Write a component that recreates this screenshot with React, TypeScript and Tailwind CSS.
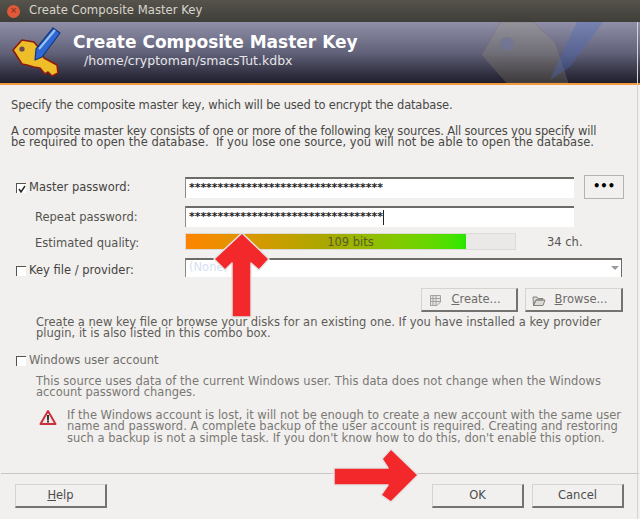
const font = { fontFamily: '"DejaVu Sans", sans-serif' };

function Arrow({ points, className }: { points: string; className: string }) {
  return (
    <svg className={className} viewBox="0 0 640 519" width={640} height={519}>
      <polygon points={points} fill="#f2282b" stroke="#e4e4e4" strokeWidth="1.5" strokeLinejoin="round" />
    </svg>
  );
}

function KeyIcon() {
  return (
    <svg width="52" height="52" viewBox="0 0 52 52" className="shrink-0">
      <path d="M1 23 L10 13 L22 15 L27 21 L32 31 L45 38 L46 46 L40 49 L36 45 L33 47 L28 41 L22 40 L15 38 L10 37 Z" fill="#eebd2a" stroke="#8c1c10" strokeWidth="1.6" strokeLinejoin="round" />
      <circle cx="10" cy="22" r="2.6" fill="#6a4a4a" />
      <path d="M23 33 L24 22 L41 1 L48 6 L30 30 Z" fill="#2f69d6" stroke="#17357c" strokeWidth="1.2" strokeLinejoin="round" />
      <path d="M27 22 L43 3" stroke="#9cc3f4" strokeWidth="2" />
    </svg>
  );
}

function Watermark() {
  return (
    <svg className="absolute right-0 top-0" width="190" height="61" viewBox="0 0 190 61">
      <path d="M32 33 L50 0 L83 0 L105 20 L118 61 L57 61 Z" fill="#a8a070" fillOpacity="0.22" stroke="#77627c" strokeOpacity="0.3" />
      <circle cx="57" cy="22" r="7" fill="#6f7599" fillOpacity="0.7" />
      <path d="M100 58 L108 40 L127 0 L153 0 L120 45 Z" fill="#4a6ac0" fillOpacity="0.35" />
    </svg>
  );
}

function Btn({ children, className }: { children: React.ReactNode; className: string }) {
  return (
    <div className={`flex items-center justify-center border-t border-l border-r-2 border-b-2 border-t-[#d6d4d1] border-l-[#d6d4d1] border-r-[#75736f] border-b-[#75736f] bg-[#f1f0ee] text-[#4c4c4c] ${className}`}>
      {children}
    </div>
  );
}

function Field({ className, children }: { className: string; children?: React.ReactNode }) {
  return (
    <div className={`flex items-center border-t-2 border-l border-t-[#6d6b68] border-l-[#8b8986] bg-white ${className}`}>
      {children}
    </div>
  );
}

function Check({ on }: { on?: boolean }) {
  return (
    <span className="flex h-[10px] w-[10px] shrink-0 items-center justify-center border-t border-l border-t-[#55534f] border-l-[#55534f] bg-white">
      {on && (
        <svg width="8" height="8" viewBox="0 0 8 8">
          <path d="M1 4 L3 7 L7 1" fill="none" stroke="#222" strokeWidth="1.4" />
        </svg>
      )}
    </span>
  );
}

const stars = "*".repeat(34);

export default function App() {
  return (
    <div className="relative h-[519px] w-[640px] overflow-hidden bg-[#f1f0ee] text-[11.5px] leading-[11.5px] text-[#55534f]" style={font}>
      <div className="flex h-[22px] items-center bg-gradient-to-b from-[#55534c] to-[#403e38] pl-[7px]">
        <span className="flex h-[13px] w-[13px] items-center justify-center rounded-full bg-[#e2593a] text-[9px] text-[#7a2a1a]">×</span>
        <span className="ml-[9px] text-[11.7px] text-[#d8d5cc]">Create Composite Master Key</span>
      </div>

      <div className="relative flex h-[61px] bg-gradient-to-b from-[#8f90a8] via-[#62627a] to-[#1f1e2c] pl-[12px] pt-[5px]">
        <Watermark />
        <KeyIcon />
        <div className="relative ml-[9px] pt-[4px]">
          <div className="text-[17px] leading-[22px] font-bold text-white">Create Composite Master Key</div>
          <div className="ml-[11px] text-[12.5px] leading-[16px] text-[#e6e6ea]">/home/cryptoman/smacsTut.kdbx</div>
        </div>
      </div>
      <div className="h-[2px] bg-[#f39a3e]" />

      <div className="px-[11px] pt-[15px] text-[#4a4845]">
        <p className="tracking-[-0.17px]">Specify the composite master key, which will be used to encrypt the database.</p>
        <p className="mt-[14px] tracking-[-0.17px]">A composite master key consists of one or more of the following key sources. All sources you specify will</p>
        <p className="tracking-[0.02px]">be required to open the database.&nbsp; If you lose one source, you will not be able to open the database.</p>
      </div>

      <div className="mt-[28px] flex h-[21px] items-center pl-[16px]">
        <div className="flex w-[169px] items-center pt-[2px] text-[#45433f]">
          <Check on />
          <span className="ml-[3px]">Master password:</span>
        </div>
        <Field className="h-[21px] w-[389px] pl-[3px]">
          <span className="text-[11px] font-bold tracking-[-0.05px] text-[#222]">{stars}</span>
        </Field>
        <div className="ml-[10px] flex h-[24px] w-[40px] items-center justify-center border border-[#b5b3b0] font-bold text-black">•••</div>
      </div>

      <div className="mt-[8px] flex h-[21px] items-center pl-[35px]">
        <span className="w-[150px] pt-[4px]">Repeat password:</span>
        <Field className="h-[21px] w-[389px] pl-[3px]">
          <span className="text-[11px] font-bold tracking-[-0.05px] text-[#222]">{stars}</span>
          <span className="h-[15px] w-px bg-[#222]" />
        </Field>
      </div>

      <div className="mt-[6px] flex h-[17px] items-center pl-[35px]">
        <span className="w-[150px] pt-[5px]">Estimated quality:</span>
        <div className="relative h-[17px] w-[331px] border border-[#dcdad7] bg-[#ebe9e7]">
          <div className="h-full w-[280px] bg-gradient-to-r from-[#ff8400] via-[#a8a800] to-[#22e800]" />
          <div className="absolute inset-0 flex items-center justify-center pt-[3px] text-[#5a5a28]">109 bits</div>
        </div>
        <span className="ml-[31px] pt-[4px]">34 ch.</span>
      </div>

      <div className="mt-[8px] flex h-[19px] items-center pl-[16px]">
        <div className="flex w-[169px] items-center pt-[7px] text-[#45433f]">
          <Check />
          <span className="ml-[3px]">Key file / provider:</span>
        </div>
        <Field className="h-[19px] w-[437px] justify-between border-r border-r-[#6d6b68] pl-[3px]">
          <span className="text-[#d5dff2]">(None)</span>
          <span className="mr-[2px] h-0 w-0 border-x-[4px] border-t-[4px] border-x-transparent border-t-[#9a9a9a]" />
        </Field>
      </div>

      <div className="mt-[11px] flex h-[24px] justify-end gap-[7px] pr-[17px]">
        <Btn className="w-[97px] gap-[9px] pr-[8px] pt-[2px] text-[#6e6c68]">
          <svg width="13" height="13" viewBox="0 0 13 13">
            <path d="M1.5 1.5 H11.5 V8 L8 11.5 H1.5 Z M4 1.5 V11 M7 1.5 V11 M1.5 4.5 H11 M1.5 7.5 H11" fill="#e6e5e3" stroke="#a3a19e" />
          </svg>
          <span><span className="underline">C</span>reate...</span>
        </Btn>
        <Btn className="w-[98px] gap-[9px] pr-[8px] pt-[2px] text-[#6e6c68]">
          <svg width="14" height="13" viewBox="0 0 14 13">
            <path d="M1 3 H5 L6 4.5 H11 V6 H4 L1.5 11.5 Z M4 6 H13 L11 11.5 H1.5 Z" fill="#dcdad4" stroke="#85827c" />
          </svg>
          <span><span className="underline">B</span>rowse...</span>
        </Btn>
      </div>

      <div className="mt-[5px] pl-[36px] text-[#5e5c58]">
        <p>Create a new key file or browse your disks for an existing one. If you have installed a key provider</p>
        <p>plugin, it is also listed in this combo box.</p>
      </div>

      <div className="mt-[15px] flex h-[13px] items-center pl-[16px] text-[#6e6c68]">
        <Check />
        <span className="ml-[3px]">Windows user account</span>
      </div>

      <div className="mt-[8px] pl-[36px] text-[#7a7874]">
        <p className="tracking-[0.03px]">This source uses data of the current Windows user. This data does not change when the Windows</p>
        <p>account password changes.</p>
      </div>

      <div className="mt-[10px] flex pl-[39px] text-[#7a7874]">
        <svg width="18" height="17" viewBox="0 0 18 17" className="shrink-0">
          <path d="M9 2 L16.5 15 H1.5 Z" fill="#f4e9e6" stroke="#c8303a" strokeWidth="2" strokeLinejoin="round" />
          <rect x="8" y="6" width="2" height="5" fill="#333" />
          <rect x="8" y="11.5" width="2" height="2" fill="#333" />
        </svg>
        <div className="ml-[10px] pt-[1px]">
          <p>If the Windows account is lost, it will not be enough to create a new account with the same user</p>
          <p>name and password. A complete backup of the user account is required. Creating and restoring</p>
          <p>such a backup is not a simple task. If you don't know how to do this, don't enable this option.</p>
        </div>
      </div>

      <div className="mx-[1px] mt-[29px] h-px bg-[#c8c6c3]" />

      <div className="mt-[10px] flex h-[24px] pl-[15px] pr-[16px]">
        <Btn className="w-[92px]"><span><span className="underline">H</span>elp</span></Btn>
        <Btn className="ml-auto w-[92px]">OK</Btn>
        <Btn className="ml-[8px] w-[92px]">Cancel</Btn>
      </div>

      <div className="absolute bottom-0 right-[2px] top-[22px] w-px bg-[#d6d4d1]" />

      <Arrow className="absolute left-0 top-0" points="242,233 269,259 259,270 251,263 251,317 232,317 232,263 225,270 214,259" />
      <Arrow className="absolute left-0 top-0" points="334,468 388,468 382,459 391,449 418,475 391,502 381,495 388,485 334,485" />
    </div>
  );
}
